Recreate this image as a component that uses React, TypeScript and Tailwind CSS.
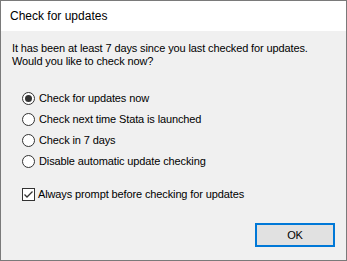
import React from "react";

function Radio({ checked, label }: { checked?: boolean; label: string }) {
  return (
    <div className="flex items-center h-[21px]">
      <div className="w-[13px] h-[13px] rounded-full border border-[#333333] bg-white flex items-center justify-center">
        {checked && <div className="w-[7px] h-[7px] rounded-full bg-[#333333]" />}
      </div>
      <span className="ml-[4px]">{label}</span>
    </div>
  );
}

export default function App() {
  return (
    <div
      className="w-[347px] h-[261px] border border-[#7a7a7a] bg-[#f0f0f0] flex flex-col text-black"
      style={{ fontFamily: '"Liberation Sans", Arial, sans-serif' }}
    >
      <div className="h-[30px] bg-white flex items-center pl-[9px] text-[12px] shrink-0">
        Check for updates
      </div>
      <div className="flex flex-col text-[11px] leading-[13px] tracking-[-0.12px] pl-[11px] pt-[11px] flex-1">
        <p>It has been at least 7 days since you last checked for updates.</p>
        <p>Would you like to check now?</p>
        <div className="mt-[20px] pl-[10px] flex flex-col">
          <Radio checked label="Check for updates now" />
          <Radio label="Check next time Stata is launched" />
          <Radio label="Check in 7 days" />
          <Radio label="Disable automatic update checking" />
        </div>
        <div className="mt-[16px] pl-[10px] flex items-center h-[13px]">
          <div className="w-[13px] h-[13px] border border-[#333333] bg-white flex items-center justify-center">
            <svg width="11" height="11" viewBox="0 0 11 11">
              <path d="M1.5 5.5 L4 8 L9.5 2.5" fill="none" stroke="#333333" strokeWidth="1.3" />
            </svg>
          </div>
          <span className="ml-[3px]">Always prompt before checking for updates</span>
        </div>
        <div className="flex justify-end mt-[22px] pr-[11px]">
          <button className="w-[80px] h-[24px] border-2 border-[#0078d7] bg-[#e1e1e1] text-[11px] flex items-center justify-center">
            OK
          </button>
        </div>
      </div>
    </div>
  );
}
